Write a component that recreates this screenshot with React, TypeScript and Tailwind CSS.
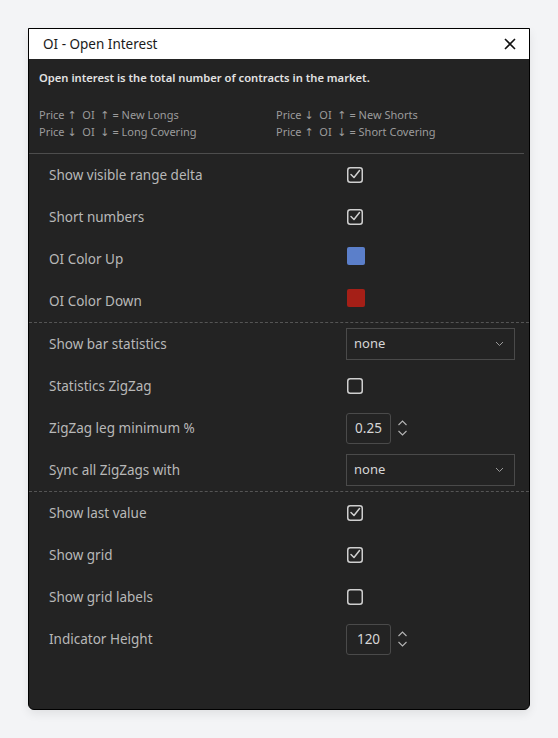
import React from 'react';

const font = { fontFamily: '"Noto Sans", "DejaVu Sans", sans-serif' };

const CheckBox: React.FC<{ checked?: boolean }> = ({ checked }) => (
  <svg width="16" height="16" viewBox="0 0 16 16" fill="none" className="ml-[1px] mb-[1px]">
    <rect x="0.75" y="0.75" width="14.5" height="14.5" rx="2.5" stroke="#cfcfcf" strokeWidth="1.5" />
    {checked && (
      <path d="M4 7.5 L7 10.5 L12.5 3.5" stroke="#cfcfcf" strokeWidth="1.5" strokeLinecap="round" strokeLinejoin="round" />
    )}
  </svg>
);

const Swatch: React.FC<{ color: string }> = ({ color }) => (
  <div className="ml-[1px] mb-[6px] w-[18px] h-[18px] rounded-[2px]" style={{ backgroundColor: color }} />
);

const Select: React.FC<{ value: string }> = ({ value }) => (
  <div className="w-[169px] h-[32px] border border-[#4a4a4a] flex items-center justify-between pl-[7px] pr-[10px]">
    <span className="text-[13px] text-[#d6d6d6]">{value}</span>
    <svg width="9" height="6" viewBox="0 0 9 6" fill="none">
      <path d="M1 1 L4.5 4.5 L8 1" stroke="#9a9a9a" strokeWidth="1" />
    </svg>
  </div>
);

const NumberInput: React.FC<{ value: string }> = ({ value }) => (
  <div className="flex items-center gap-[6px]">
    <div className="w-[45px] h-[31px] border border-[#4a4a4a] rounded-[3px] flex items-center justify-center text-[13.5px] text-[#d6d6d6]">
      {value}
    </div>
    <svg width="11" height="18" viewBox="0 0 11 18" fill="none">
      <path d="M1.5 6 L5.5 2 L9.5 6" stroke="#b5b5b5" strokeWidth="1.1" />
      <path d="M1.5 12 L5.5 16 L9.5 12" stroke="#b5b5b5" strokeWidth="1.1" />
    </svg>
  </div>
);

const Row: React.FC<{ label: string; children: React.ReactNode }> = ({ label, children }) => (
  <div className="h-[42px] flex items-center pl-[20px]">
    <div className="w-[297px] text-[13.5px] text-[#b8b8b8]">{label}</div>
    <div className="flex items-center">{children}</div>
  </div>
);

export default function App() {
  return (
    <div className="min-h-screen bg-[#f3f4f6] pt-[28px] pl-[28px]" style={font}>
      <div className="w-[502px] h-[682px] bg-[#232323] border border-black rounded-b-[6px] shadow-[0_4px_10px_rgba(0,0,0,0.08)] flex flex-col overflow-hidden">
        {/* Title bar */}
        <div className="h-[30px] bg-white flex items-center justify-between pl-[14px] pr-[13px] shrink-0">
          <span className="text-[13.5px] text-[#1a1a1a]">OI - Open Interest</span>
          <svg width="12" height="12" viewBox="0 0 12 12" fill="none">
            <path d="M1 1 L11 11 M11 1 L1 11" stroke="#111" strokeWidth="1.6" />
          </svg>
        </div>

        {/* Intro */}
        <div className="px-[10px] pt-[11px] pb-[13px]">
          <p className="text-[11.2px] font-semibold text-[#e2e2e2] leading-[16px]">
            Open interest is the total number of contracts in the market.
          </p>
          <div className="grid grid-cols-[237px_1fr] mt-[20px] text-[11px] text-[#9c9c9c] leading-[17px]">
            <span>Price ↑&nbsp; OI&nbsp; ↑ = New Longs</span>
            <span>Price ↓&nbsp; OI&nbsp; ↑ = New Shorts</span>
            <span>Price ↓&nbsp; OI&nbsp; ↓ = Long Covering</span>
            <span>Price ↑&nbsp; OI&nbsp; ↓ = Short Covering</span>
          </div>
        </div>
        <div className="h-px bg-[#4d4d4d] mr-[5px]" />

        {/* Display */}
        <Row label="Show visible range delta"><CheckBox checked /></Row>
        <Row label="Short numbers"><CheckBox checked /></Row>
        <Row label="OI Color Up"><Swatch color="#5b7fca" /></Row>
        <Row label="OI Color Down"><Swatch color="#a51f17" /></Row>
        <div className="border-t border-dashed border-[#555]" />

        {/* Statistics */}
        <Row label="Show bar statistics"><Select value="none" /></Row>
        <Row label="Statistics ZigZag"><CheckBox /></Row>
        <Row label="ZigZag leg minimum %"><NumberInput value="0.25" /></Row>
        <Row label="Sync all ZigZags with"><Select value="none" /></Row>
        <div className="border-t border-dashed border-[#555]" />

        {/* Grid */}
        <Row label="Show last value"><CheckBox checked /></Row>
        <Row label="Show grid"><CheckBox checked /></Row>
        <Row label="Show grid labels"><CheckBox /></Row>
        <Row label="Indicator Height"><NumberInput value="120" /></Row>
      </div>
    </div>
  );
}
